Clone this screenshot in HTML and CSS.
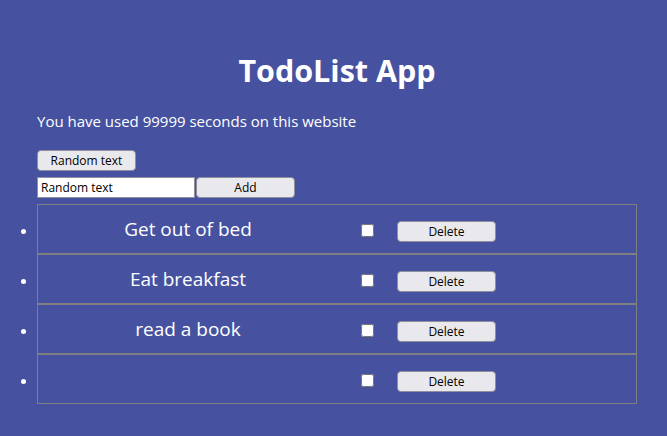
FILE: index.html
```html
<!DOCTYPE html>
<html lang="en">
<head>
<meta charset="utf-8">
<title>TodoList App</title>
<link rel="stylesheet" href="styles.css">
</head>
<body>
<div class="app">
  <h1 class="title">TodoList App</h1>
  <p class="usage">You have used 99999 seconds on this website</p>
  <div class="controls">
    <button class="btn btn-random">Random text</button>
    <div class="add-row">
      <input class="todo-input" type="text" value="Random text">
      <button class="btn btn-add">Add</button>
    </div>
  </div>
  <ul class="todo-list">
    <li class="todo-item"><div class="todo-row"><span class="todo-text">Get out of bed</span><input class="todo-check" type="checkbox"><button class="btn btn-delete">Delete</button></div></li>
    <li class="todo-item"><div class="todo-row"><span class="todo-text">Eat breakfast</span><input class="todo-check" type="checkbox"><button class="btn btn-delete">Delete</button></div></li>
    <li class="todo-item"><div class="todo-row"><span class="todo-text">read a book</span><input class="todo-check" type="checkbox"><button class="btn btn-delete">Delete</button></div></li>
    <li class="todo-item"><div class="todo-row"><span class="todo-text">&nbsp;</span><input class="todo-check" type="checkbox"><button class="btn btn-delete">Delete</button></div></li>
  </ul>
</div>
</body>
</html>
```

FILE: styles.css
```css
html, body {
  margin: 0;
  padding: 0;
  background: #46529f;
}

body {
  font-family: "Open Sans", "Noto Sans", sans-serif;
  color: #ffffff;
}

.app {
  width: 600px;
  margin-left: 37px;
  padding-top: 50px;
}

.title {
  margin: 0;
  font-size: 30.5px;
  line-height: 40px;
  font-weight: 700;
  text-align: center;
}

.usage {
  margin: 20px 0 0 0;
  font-size: 15px;
  line-height: 22px;
}

.controls {
  margin-top: 18px;
  display: flex;
  flex-direction: column;
  align-items: flex-start;
  gap: 6px;
}

.add-row {
  display: flex;
  gap: 1px;
}

.btn {
  font-family: "Open Sans", "Noto Sans", sans-serif;
  background: #e9e9ed;
  color: #000000;
  border: 1px solid #8f8f9d;
  border-radius: 4px;
  height: 21px;
  width: 99px;
  padding: 0;
  font-size: 12px;
  line-height: 19px;
}

.todo-input {
  box-sizing: border-box;
  width: 158px;
  height: 21px;
  margin: 0;
  padding: 0 3px;
  border: 1px solid #8f8f9d;
  border-radius: 0;
  background: #ffffff;
  color: #000000;
  font-family: "Open Sans", "Noto Sans", sans-serif;
  font-size: 12px;
}

.todo-list {
  margin: 6px 0 0 0;
  padding: 0;
}

.todo-item {
  list-style: disc outside;
  border: 1px solid #808080;
  height: 48px;
  font-size: 16px;
  line-height: 48px;
}

.todo-item::marker {
  font-size: 13px;
}

.todo-row {
  height: 48px;
  display: flex;
  align-items: center;
}

.todo-text {
  width: 300px;
  text-align: center;
  font-size: 19px;
  line-height: 24px;
  margin-top: -1px;
}

.todo-check {
  width: 13px;
  height: 13px;
  margin: 2px 0 0 23px;
}

.btn-delete {
  margin-left: 23px;
  margin-top: 4px;
  font-size: 12px;
}
```
